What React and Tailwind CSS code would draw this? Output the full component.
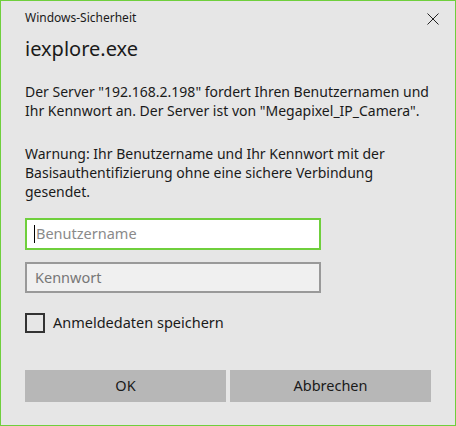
export default function App() {
  return (
    <div
      className="w-[456px] h-[426px] border border-[#6fcf3c] bg-[#e6e6e6] text-[#1a1a1a] flex flex-col"
      style={{ fontFamily: '"Noto Sans", "Open Sans", sans-serif' }}
    >
      {/* Title bar */}
      <div className="flex items-center justify-between h-[34px] pl-[24px] pr-[16px]">
        <span className="text-[12px] text-[#1a1a1a]">Windows-Sicherheit</span>
        <svg width="12" height="12" viewBox="0 0 12 12" className="mt-[2px]">
          <path d="M0.5 0.5 L11.5 11.5 M11.5 0.5 L0.5 11.5" stroke="#222" strokeWidth="1" fill="none" />
        </svg>
      </div>

      <div className="px-[24px] flex flex-col">
        <h1 className="text-[20px] leading-[26px] mt-[1px]">iexplore.exe</h1>

        <p className="text-[14px] leading-[19px] mt-[20px] whitespace-nowrap">
          Der Server "192.168.2.198" fordert Ihren Benutzernamen und
          <br />
          Ihr Kennwort an. Der Server ist von "Megapixel_IP_Camera".
        </p>
        <p className="text-[14px] leading-[19px] mt-[24px] whitespace-nowrap">
          Warnung: Ihr Benutzername und Ihr Kennwort mit der
          <br />
          Basisauthentifizierung ohne eine sichere Verbindung
          <br />
          gesendet.
        </p>

        <div className="mt-[17px] w-[296px] h-[32px] border-2 border-[#6fcf3c] bg-white flex items-center pl-[7px]">
          <span className="w-px h-[18px] bg-black" />
          <span className="text-[14.5px] text-[#8a8a8a] ml-[1px]">Benutzername</span>
        </div>

        <div className="mt-[12px] w-[296px] h-[31px] border-2 border-[#999] bg-[#f0f0f0] flex items-center pl-[8px]">
          <span className="text-[14.5px] text-[#777]">Kennwort</span>
        </div>

        <label className="mt-[19px] flex items-center gap-[8px]">
          <span className="w-[20px] h-[20px] border-2 border-[#333] bg-[#e6e6e6]" />
          <span className="text-[14.5px]">Anmeldedaten speichern</span>
        </label>

        <div className="mt-[36px] flex gap-[4px]">
          <button className="w-[201px] h-[32px] bg-[#b7b7b7] text-[14.5px] text-[#1a1a1a]">OK</button>
          <button className="w-[201px] h-[32px] bg-[#b7b7b7] text-[14.5px] text-[#1a1a1a]">Abbrechen</button>
        </div>
      </div>
    </div>
  );
}
